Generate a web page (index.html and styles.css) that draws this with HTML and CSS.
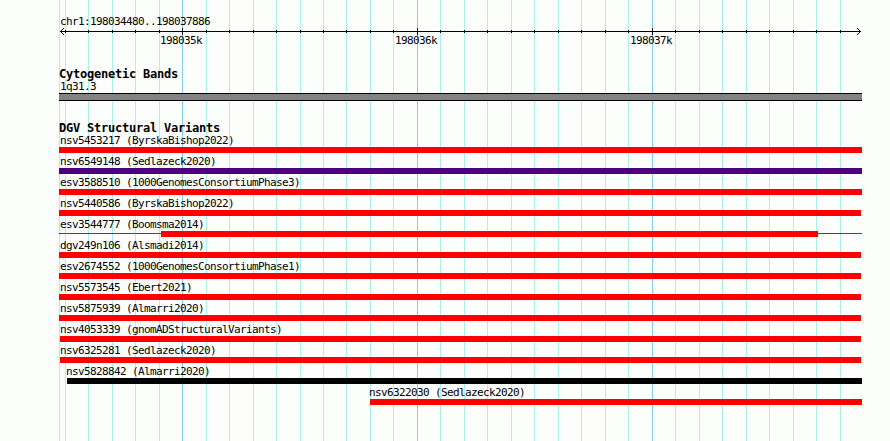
FILE: index.html
```html
<!DOCTYPE html>
<html lang="en">
<head>
  <meta charset="UTF-8">
  <title>chr1:198034480..198037886</title>
  <link rel="stylesheet" href="styles.css">
</head>
<body>

  <div class="browser">
    <!-- Grid lines behind all tracks -->
    <svg class="grid" width="890" height="441" shape-rendering="crispEdges">
      <path class="grid-minor" d="M59.5 0V441M65.5 0V441M88.5 0V441M112.5 0V441M135.5 0V441M159.5 0V441M206.5 0V441M229.5 0V441M253.5 0V441M276.5 0V441M300.5 0V441M323.5 0V441M346.5 0V441M370.5 0V441M393.5 0V441M440.5 0V441M464.5 0V441M487.5 0V441M511.5 0V441M534.5 0V441M558.5 0V441M581.5 0V441M605.5 0V441M628.5 0V441M675.5 0V441M699.5 0V441M722.5 0V441M746.5 0V441M769.5 0V441M793.5 0V441M816.5 0V441M840.5 0V441"/>
      <path class="grid-major" d="M182.5 0V441M417.5 0V441M652.5 0V441"/>
    </svg>

    <div class="panel">
      <div class="ruler">
        <div class="label">chr1:198034480..198037886</div>
        <svg class="axis" width="803" height="8" shape-rendering="crispEdges">
          <path d="M1 3.5H802"/>
          <path d="M6.5 2V5M29.5 2V5M53.5 2V5M76.5 2V5M100.5 2V5M147.5 2V5M170.5 2V5M194.5 2V5M217.5 2V5M241.5 2V5M264.5 2V5M287.5 2V5M311.5 2V5M334.5 2V5M381.5 2V5M405.5 2V5M428.5 2V5M452.5 2V5M475.5 2V5M499.5 2V5M522.5 2V5M546.5 2V5M569.5 2V5M616.5 2V5M640.5 2V5M663.5 2V5M687.5 2V5M710.5 2V5M734.5 2V5M757.5 2V5M781.5 2V5"/>
          <path d="M123.5 0V7M358.5 0V7M593.5 0V7"/>
          <path d="M2 2.5h1M3 1.5h1M4 0.5h1M2 4.5h1M3 5.5h1M4 6.5h1M800 2.5h1M799 1.5h1M798 0.5h1M800 4.5h1M799 5.5h1M798 6.5h1"/>
        </svg>
        <div class="scale">
          <span>198035k</span>
          <span>198036k</span>
          <span>198037k</span>
        </div>
      </div>

      <div class="track cytobands">
        <h2>Cytogenetic Bands</h2>
        <div class="label">1q31.3</div>
        <div class="band"></div>
      </div>

      <div class="track variants">
        <h2>DGV Structural Variants</h2>
        <div class="variant">
          <div class="label">nsv5453217 (ByrskaBishop2022)</div>
          <div class="bar"></div>
        </div>
        <div class="variant">
          <div class="label">nsv6549148 (Sedlazeck2020)</div>
          <div class="bar complex"></div>
        </div>
        <div class="variant">
          <div class="label">esv3588510 (1000GenomesConsortiumPhase3)</div>
          <div class="bar"></div>
        </div>
        <div class="variant">
          <div class="label">nsv5440586 (ByrskaBishop2022)</div>
          <div class="bar short"></div>
        </div>
        <div class="variant">
          <div class="label">esv3544777 (Boomsma2014)</div>
          <div class="span"><div class="bar core"></div></div>
        </div>
        <div class="variant">
          <div class="label">dgv249n106 (Alsmadi2014)</div>
          <div class="bar short"></div>
        </div>
        <div class="variant">
          <div class="label">esv2674552 (1000GenomesConsortiumPhase1)</div>
          <div class="bar short"></div>
        </div>
        <div class="variant">
          <div class="label">nsv5573545 (Ebert2021)</div>
          <div class="bar short"></div>
        </div>
        <div class="variant">
          <div class="label">nsv5875939 (Almarri2020)</div>
          <div class="bar short"></div>
        </div>
        <div class="variant">
          <div class="label">nsv4053339 (gnomADStructuralVariants)</div>
          <div class="bar short inset"></div>
        </div>
        <div class="variant">
          <div class="label">nsv6325281 (Sedlazeck2020)</div>
          <div class="bar short inset"></div>
        </div>
        <div class="variant late">
          <div class="label">nsv5828842 (Almarri2020)</div>
          <div class="bar inversion"></div>
        </div>
        <div class="variant partial">
          <div class="label">nsv6322030 (Sedlazeck2020)</div>
          <div class="bar"></div>
        </div>
      </div>
    </div>
  </div>

</body>
</html>
```

FILE: styles.css
```css
body {
  margin: 0;
  background-color: #fcfefc;
  color: #000;
  font-family: "DejaVu Sans Mono", monospace;
}

.browser {
  position: relative;
  width: 890px;
  height: 441px;
  overflow: hidden;
}

.grid {
  position: absolute;
  top: 0;
  left: 0;
}

.grid-minor {
  stroke: #acf0ec;
}

.grid-major {
  stroke: #84ceec;
}

.panel {
  position: relative;
  width: 803px;
  margin-left: 59px;
  padding-top: 13px;
}

.label, .scale {
  height: 15px;
  line-height: 17px;
  font-size: 11px;
  letter-spacing: -0.622px;
  white-space: nowrap;
}

.label {
  padding-left: 1px;
}

.ruler {
  height: 54px;
}

.axis {
  display: block;
  stroke: #000;
}

.scale {
  display: flex;
  margin-top: -4px;
  padding-left: 101px;
}

.scale span {
  flex: none;
  width: 235px;
}

h2 {
  height: 12px;
  margin: 0;
  line-height: 17px;
  font-size: 12px;
  font-weight: bold;
  letter-spacing: -0.224px;
  white-space: nowrap;
}

.cytobands h2, .cytobands .label {
  line-height: 15px;
}

.band {
  height: 6px;
  margin-top: -1px;
  border-top: 1px solid #000;
  border-bottom: 1px solid #000;
  background-color: #848284;
}

.variants {
  margin-top: 19px;
}

.bar {
  height: 6px;
  background-color: #ff0000;
}

.complex {
  background-color: #4b0082;
}

.inversion {
  background-color: #000;
}

.short {
  margin-right: 1px;
}

.inset {
  margin-left: 1px;
}

/* Thin line for the uncertain ends */
.span {
  background: linear-gradient(#e8000c, #e8000c) 0 2px / 100% 1px no-repeat;
}

.core {
  margin-left: 102px;
  margin-right: 44px;
}

.late {
  margin-left: 8px;
}

.late .label, .partial .label {
  margin-left: -1px;
  padding-left: 0;
}

.partial {
  margin-left: 311px;
}
```
